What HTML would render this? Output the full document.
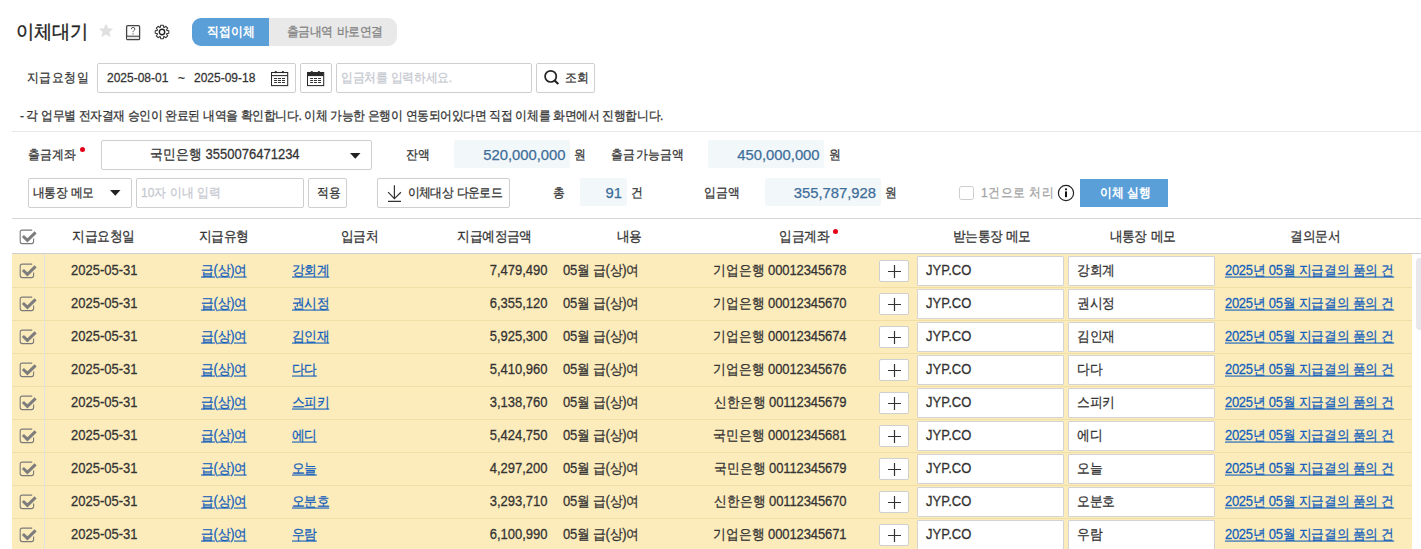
<!DOCTYPE html><html lang="ko"><head><meta charset="utf-8"><style>
*{box-sizing:border-box;margin:0;padding:0}
html,body{width:1421px;height:549px;overflow:hidden;background:#fff}
body{position:relative;font-family:"Liberation Sans",sans-serif;color:#333;font-size:13px;-webkit-text-stroke:0.25px currentColor}
.a{position:absolute}
.box{position:absolute;border:1px solid #cfcfcf;border-radius:2px;background:#fff}
.t{position:absolute;white-space:nowrap;line-height:20px;height:20px;transform:scaleY(1.1)}
.hl{position:absolute;left:12px;width:1409px;height:1px;background:#e8e8e8}
.amt{position:absolute;background:#f2f7f9;border-radius:2px}
.row{position:absolute;left:12px;width:1400px;height:33px;background:#fdecbb;border-bottom:1px solid #f0e0a8}
.lnk{color:#135fbc;text-decoration:underline}
.inp{position:absolute;top:1px;height:30px;background:#fff;border:1px solid #d3d3d3;border-radius:1px}
</style></head><body>
<div class="t" style="left:16px;top:21.8px;font-size:18px;color:#222;-webkit-text-stroke:0.35px #222;transform:scaleY(1.04)">이체대기</div>
<svg class="a" style="left:98px;top:23px" width="16" height="16" viewBox="0 0 16 16"><path d="M8 0.6L10.2 5.2L15.2 5.7L11.4 9.1L12.6 14.3L8 11.6L3.4 14.3L4.6 9.1L0.8 5.7L5.8 5.2Z" fill="#e0e0e0"/></svg>
<svg class="a" style="left:125px;top:24px" width="16" height="17" viewBox="0 0 16 17"><rect x="1.6" y="1.6" width="13" height="14" rx="1.2" fill="none" stroke="#444" stroke-width="1.3"/><rect x="2.2" y="12.4" width="11.8" height="2.6" fill="#e6e6e6"/><line x1="1.6" y1="12.2" x2="14.6" y2="12.2" stroke="#444" stroke-width="1.1"/><path d="M6.3 5.2Q6.4 3.4 8.1 3.4Q9.8 3.4 9.8 5Q9.8 6 8.8 6.6Q8 7.1 8 8.2" fill="none" stroke="#444" stroke-width="0.9"/><circle cx="8" cy="9.9" r="0.55" fill="#444"/></svg>
<svg class="a" style="left:154px;top:24px" width="16" height="16" viewBox="0 0 16 16"><path d="M6.37 3.27 L6.68 1.23 L9.32 1.23 L9.63 3.27 L10.19 3.51 L11.86 2.28 L13.72 4.14 L12.49 5.81 L12.73 6.37 L14.77 6.68 L14.77 9.32 L12.73 9.63 L12.49 10.19 L13.72 11.86 L11.86 13.72 L10.19 12.49 L9.63 12.73 L9.32 14.77 L6.68 14.77 L6.37 12.73 L5.81 12.49 L4.14 13.72 L2.28 11.86 L3.51 10.19 L3.27 9.63 L1.23 9.32 L1.23 6.68 L3.27 6.37 L3.51 5.81 L2.28 4.14 L4.14 2.28 L5.81 3.51Z" fill="none" stroke="#333" stroke-width="1.05" stroke-linejoin="round"/><circle cx="8" cy="8" r="2.7" fill="none" stroke="#222" stroke-width="1.4"/></svg>
<div class="a" style="left:192px;top:18px;width:205px;height:28px;border-radius:9px;background:#e9e9e9;overflow:hidden"><div class="a" style="left:0;top:0;width:77px;height:28px;background:#5b9fd9"></div></div>
<div class="t" style="left:207px;top:22px;font-size:12px;color:#fff;font-weight:bold;-webkit-text-stroke:0">직접이체</div>
<div class="t" style="left:287px;top:22px;font-size:12px;letter-spacing:-0.6px;color:#828282;word-spacing:1.5px">출금내역 바로연결</div>
<div class="t" style="left:27px;top:67.5px;font-size:12px;letter-spacing:0.45px">지급요청일</div>
<div class="box" style="left:97px;top:63px;width:199px;height:30px"></div>
<div class="t" style="left:107px;top:68px;font-size:12px">2025-08-01</div>
<div class="t" style="left:178px;top:68px;font-size:12px">~</div>
<div class="t" style="left:194px;top:68px;font-size:12px">2025-09-18</div>
<svg class="a" style="left:271px;top:70px" width="18" height="17" viewBox="0 0 18 17"><rect x="0.5" y="2.5" width="16.2" height="13.1" fill="none" stroke="#2a2a2a" stroke-width="1.05"/><line x1="0.5" y1="5.6" x2="16.7" y2="5.6" stroke="#2a2a2a" stroke-width="1.05"/><circle cx="4.8" cy="2.2" r="1.15" fill="#2a2a2a"/><circle cx="11.9" cy="2.2" r="1.15" fill="#2a2a2a"/><g stroke="#2a2a2a" stroke-width="0.95"><path d="M3.1 8.5h3M7 8.5h3M11 8.5h3M3.1 10.5h3M7 10.5h3M11 10.5h3M3.1 12.5h3M7 12.5h3M11 12.5h3"/></g></svg>
<div class="box" style="left:300px;top:63px;width:32px;height:30px"></div>
<svg class="a" style="left:307px;top:70px" width="18" height="17" viewBox="0 0 18 17"><rect x="0.5" y="2.5" width="16.2" height="13.1" fill="none" stroke="#2a2a2a" stroke-width="1.05"/><rect x="0.5" y="2.5" width="16.2" height="3.6" fill="#2a2a2a"/><circle cx="4.8" cy="2.2" r="1.15" fill="#2a2a2a"/><circle cx="11.9" cy="2.2" r="1.15" fill="#2a2a2a"/><g stroke="#2a2a2a" stroke-width="0.95"><path d="M3.1 8.5h3M7 8.5h3M11 8.5h3M3.1 10.5h3M7 10.5h3M11 10.5h3M3.1 12.5h3M7 12.5h3M11 12.5h3"/></g></svg>
<div class="box" style="left:336px;top:63px;width:196px;height:30px"></div>
<div class="t" style="left:341px;top:68.3px;font-size:12px;letter-spacing:-0.35px;color:#c6c9d0">입금처를 입력하세요.</div>
<div class="box" style="left:536px;top:63px;width:59px;height:30px"></div>
<svg class="a" style="left:543px;top:69px" width="18" height="18" viewBox="0 0 18 18"><circle cx="7.7" cy="7.4" r="5.6" fill="none" stroke="#222" stroke-width="1.7"/><line x1="11.6" y1="11.4" x2="15.3" y2="15.1" stroke="#222" stroke-width="2.1"/></svg>
<div class="t" style="left:565px;top:68px;font-size:12px">조회</div>
<div class="t" style="left:20px;top:106px;font-size:12px;letter-spacing:-0.43px">- 각 업무별 전자결재 승인이 완료된 내역을 확인합니다. 이체 가능한 은행이 연동되어있다면 직접 이체를 화면에서 진행합니다.</div>
<div class="hl" style="top:131px"></div>
<div class="t" style="left:28px;top:144.5px;font-size:12px">출금계좌</div>
<div class="a" style="left:80px;top:147px;width:5px;height:5px;border-radius:50%;background:#e5001a"></div>
<div class="box" style="left:101px;top:140px;width:271px;height:30px"></div>
<div class="t" style="left:150px;top:144.5px;font-size:13px">국민은행 3550076471234</div>
<svg class="a" style="left:350px;top:153px" width="11" height="6" viewBox="0 0 11 6"><path d="M0 0H10.5L5.25 5.8Z" fill="#222"/></svg>
<div class="t" style="left:405.5px;top:144.5px;font-size:12px;letter-spacing:0.8px">잔액</div>
<div class="amt" style="left:454px;top:140px;width:116px;height:28px"></div>
<div class="t" style="left:265.5px;top:144.5px;font-size:14.8px;color:#3d6d99;width:300px;text-align:right;transform:none">520,000,000</div>
<div class="t" style="left:574px;top:144.5px;font-size:12px">원</div>
<div class="t" style="left:611px;top:144.5px;font-size:12px;letter-spacing:0.3px">출금가능금액</div>
<div class="amt" style="left:708px;top:140px;width:116px;height:28px"></div>
<div class="t" style="left:519.6px;top:144.5px;font-size:14.8px;color:#3d6d99;width:300px;text-align:right;transform:none">450,000,000</div>
<div class="t" style="left:829px;top:144.5px;font-size:12px">원</div>
<div class="box" style="left:28px;top:178px;width:104px;height:30px"></div>
<div class="t" style="left:33px;top:183px;font-size:12px;letter-spacing:-0.75px;word-spacing:1.5px">내통장 메모</div>
<svg class="a" style="left:110px;top:190px" width="11" height="6" viewBox="0 0 11 6"><path d="M0 0H10.5L5.25 5.8Z" fill="#222"/></svg>
<div class="box" style="left:136px;top:178px;width:168px;height:30px"></div>
<div class="t" style="left:141px;top:183px;font-size:12px;color:#c6c9d0">10자 이내 입력</div>
<div class="box" style="left:308px;top:178px;width:39px;height:30px"></div>
<div class="t" style="left:317px;top:183px;font-size:12px">적용</div>
<div class="box" style="left:377px;top:178px;width:133px;height:30px"></div>
<svg class="a" style="left:386px;top:184px" width="17" height="19" viewBox="0 0 17 19"><path d="M8.4 1.2V14.6M2.1 8.2L8.4 14.6L14.9 8.2M2 17.4H15" fill="none" stroke="#333" stroke-width="1.2"/></svg>
<div class="t" style="left:408px;top:183px;font-size:12px;letter-spacing:-0.77px;word-spacing:1.5px">이체대상 다운로드</div>
<div class="t" style="left:553px;top:183px;font-size:12px">총</div>
<div class="amt" style="left:580px;top:178px;width:47px;height:28px"></div>
<div class="t" style="left:322px;top:183px;font-size:14.8px;color:#3d6d99;width:300px;text-align:right;transform:none">91</div>
<div class="t" style="left:631px;top:183px;font-size:12px">건</div>
<div class="t" style="left:704px;top:183px;font-size:12px">입금액</div>
<div class="amt" style="left:765px;top:178px;width:116px;height:28px"></div>
<div class="t" style="left:576px;top:183px;font-size:14.8px;color:#3d6d99;width:300px;text-align:right;transform:none">355,787,928</div>
<div class="t" style="left:885px;top:183px;font-size:12px">원</div>
<div class="a" style="left:959px;top:186px;width:15px;height:14px;border:1.5px solid #cdcdcd;border-radius:2.5px"></div>
<div class="t" style="left:981px;top:183px;font-size:12px;letter-spacing:0.45px;color:#a4a4a4">1건으로 처리</div>
<svg class="a" style="left:1057px;top:184px" width="18" height="18" viewBox="0 0 18 18"><circle cx="9" cy="9" r="7.6" fill="none" stroke="#222" stroke-width="1.2"/><circle cx="9" cy="5.3" r="1.1" fill="#111"/><rect x="8" y="7.4" width="2" height="5.8" fill="#111"/></svg>
<div class="a" style="left:1080px;top:179px;width:88px;height:28px;background:#5b9fd9"></div>
<div class="t" style="left:1100px;top:183px;font-size:12px;color:#fff;font-weight:bold;-webkit-text-stroke:0">이체 실행</div>
<div class="hl" style="top:218px;background:#d6d6d6"></div>
<div class="a" style="left:12px;top:253px;width:1409px;height:1px;background:#cfcfcf"></div>
<svg class="a" style="left:19px;top:229px" width="18" height="16" viewBox="0 0 18 16"><path d="M13.2 1.1H3.2Q1.2 1.1 1.2 3.1V12.6Q1.2 14.6 3.2 14.6H12.6Q14.6 14.6 14.6 12.6V9.5" fill="none" stroke="#7a7a7a" stroke-width="1.1"/><path d="M3.9 7.0L8.4 11.3L16.6 3.4" fill="none" stroke="#7d7d7d" stroke-width="3"/></svg>
<div class="t" style="left:-46.5px;top:226.8px;font-size:13px;letter-spacing:-0.55px;width:300px;text-align:center">지급요청일</div>
<div class="t" style="left:73.6px;top:226.8px;font-size:13px;letter-spacing:-0.55px;width:300px;text-align:center">지급유형</div>
<div class="t" style="left:209.39999999999998px;top:226.8px;font-size:13px;letter-spacing:-0.55px;width:300px;text-align:center">입금처</div>
<div class="t" style="left:344.6px;top:226.8px;font-size:13px;letter-spacing:-0.55px;width:300px;text-align:center">지급예정금액</div>
<div class="t" style="left:479.4px;top:226.8px;font-size:13px;letter-spacing:-0.55px;width:300px;text-align:center">내용</div>
<div class="t" style="left:654.1px;top:226.8px;font-size:13px;letter-spacing:-0.55px;width:300px;text-align:center">입금계좌</div>
<div class="t" style="left:841.9px;top:226.8px;font-size:13px;letter-spacing:-0.8px;width:300px;text-align:center;word-spacing:1.5px">받는통장 메모</div>
<div class="t" style="left:992.4000000000001px;top:226.8px;font-size:13px;letter-spacing:-0.8px;width:300px;text-align:center;word-spacing:1.5px">내통장 메모</div>
<div class="t" style="left:1165.25px;top:226.8px;font-size:13px;letter-spacing:-0.55px;width:300px;text-align:center">결의문서</div>
<div class="a" style="left:833px;top:229px;width:5px;height:5px;border-radius:50%;background:#e5001a"></div>
<div class="a" style="left:12px;top:254px;width:1400px;height:1px;background:#fdecbb"></div><div class="a" style="left:44px;top:254px;width:1px;height:1px;background:#e2e2e2"></div>
<div class="row" style="top:255px"><div class="a" style="left:32px;top:0;width:1px;height:33px;background:#e2e2e2"></div><svg class="a" style="left:7px;top:8px" width="18" height="16" viewBox="0 0 18 16"><path d="M13.2 1.1H3.2Q1.2 1.1 1.2 3.1V12.6Q1.2 14.6 3.2 14.6H12.6Q14.6 14.6 14.6 12.6V9.5" fill="none" stroke="#7a7a7a" stroke-width="1.1"/><path d="M3.9 7.0L8.4 11.3L16.6 3.4" fill="none" stroke="#7d7d7d" stroke-width="3"/></svg><div class="t" style="left:59px;top:5.5px;font-size:13px">2025-05-31</div><div class="t lnk" style="left:189px;top:5.5px;font-size:13px;letter-spacing:-0.4px">급(상)여</div><div class="t lnk" style="left:280px;top:5.5px;font-size:13px;letter-spacing:-0.6px">강회계</div><div class="t" style="left:235.5px;top:5.5px;font-size:13px;width:300px;text-align:right">7,479,490</div><div class="t" style="left:551px;top:5.5px;font-size:13px;letter-spacing:-0.3px">05월 급(상)여</div><div class="t" style="left:534.5px;top:5.5px;font-size:13px;letter-spacing:-0.1px;width:300px;text-align:right">기업은행 00012345678</div><div class="a" style="left:867px;top:5px;width:30px;height:22px;background:#fff;border:1px solid #cfcfcf;border-radius:2px"></div><svg class="a" style="left:875px;top:9px" width="15" height="15" viewBox="0 0 15 15"><path d="M1 7.5H14M7.5 1V14" stroke="#333" stroke-width="1.2"/></svg><div class="inp" style="left:905px;width:147px"></div><div class="t" style="left:914px;top:5.5px;font-size:13px">JYP.CO</div><div class="inp" style="left:1056px;width:147px"></div><div class="t" style="left:1065px;top:5.5px;font-size:13px;letter-spacing:-0.3px">강회계</div><div class="t lnk" style="left:1213px;top:5.5px;font-size:13px;letter-spacing:-0.3px">2025년 05월 지급결의 품의 건</div></div>
<div class="row" style="top:288px"><div class="a" style="left:32px;top:0;width:1px;height:33px;background:#e2e2e2"></div><svg class="a" style="left:7px;top:8px" width="18" height="16" viewBox="0 0 18 16"><path d="M13.2 1.1H3.2Q1.2 1.1 1.2 3.1V12.6Q1.2 14.6 3.2 14.6H12.6Q14.6 14.6 14.6 12.6V9.5" fill="none" stroke="#7a7a7a" stroke-width="1.1"/><path d="M3.9 7.0L8.4 11.3L16.6 3.4" fill="none" stroke="#7d7d7d" stroke-width="3"/></svg><div class="t" style="left:59px;top:5.5px;font-size:13px">2025-05-31</div><div class="t lnk" style="left:189px;top:5.5px;font-size:13px;letter-spacing:-0.4px">급(상)여</div><div class="t lnk" style="left:280px;top:5.5px;font-size:13px;letter-spacing:-0.6px">권시정</div><div class="t" style="left:235.5px;top:5.5px;font-size:13px;width:300px;text-align:right">6,355,120</div><div class="t" style="left:551px;top:5.5px;font-size:13px;letter-spacing:-0.3px">05월 급(상)여</div><div class="t" style="left:534.5px;top:5.5px;font-size:13px;letter-spacing:-0.1px;width:300px;text-align:right">기업은행 00012345670</div><div class="a" style="left:867px;top:5px;width:30px;height:22px;background:#fff;border:1px solid #cfcfcf;border-radius:2px"></div><svg class="a" style="left:875px;top:9px" width="15" height="15" viewBox="0 0 15 15"><path d="M1 7.5H14M7.5 1V14" stroke="#333" stroke-width="1.2"/></svg><div class="inp" style="left:905px;width:147px"></div><div class="t" style="left:914px;top:5.5px;font-size:13px">JYP.CO</div><div class="inp" style="left:1056px;width:147px"></div><div class="t" style="left:1065px;top:5.5px;font-size:13px;letter-spacing:-0.3px">권시정</div><div class="t lnk" style="left:1213px;top:5.5px;font-size:13px;letter-spacing:-0.3px">2025년 05월 지급결의 품의 건</div></div>
<div class="row" style="top:321px"><div class="a" style="left:32px;top:0;width:1px;height:33px;background:#e2e2e2"></div><svg class="a" style="left:7px;top:8px" width="18" height="16" viewBox="0 0 18 16"><path d="M13.2 1.1H3.2Q1.2 1.1 1.2 3.1V12.6Q1.2 14.6 3.2 14.6H12.6Q14.6 14.6 14.6 12.6V9.5" fill="none" stroke="#7a7a7a" stroke-width="1.1"/><path d="M3.9 7.0L8.4 11.3L16.6 3.4" fill="none" stroke="#7d7d7d" stroke-width="3"/></svg><div class="t" style="left:59px;top:5.5px;font-size:13px">2025-05-31</div><div class="t lnk" style="left:189px;top:5.5px;font-size:13px;letter-spacing:-0.4px">급(상)여</div><div class="t lnk" style="left:280px;top:5.5px;font-size:13px;letter-spacing:-0.6px">김인재</div><div class="t" style="left:235.5px;top:5.5px;font-size:13px;width:300px;text-align:right">5,925,300</div><div class="t" style="left:551px;top:5.5px;font-size:13px;letter-spacing:-0.3px">05월 급(상)여</div><div class="t" style="left:534.5px;top:5.5px;font-size:13px;letter-spacing:-0.1px;width:300px;text-align:right">기업은행 00012345674</div><div class="a" style="left:867px;top:5px;width:30px;height:22px;background:#fff;border:1px solid #cfcfcf;border-radius:2px"></div><svg class="a" style="left:875px;top:9px" width="15" height="15" viewBox="0 0 15 15"><path d="M1 7.5H14M7.5 1V14" stroke="#333" stroke-width="1.2"/></svg><div class="inp" style="left:905px;width:147px"></div><div class="t" style="left:914px;top:5.5px;font-size:13px">JYP.CO</div><div class="inp" style="left:1056px;width:147px"></div><div class="t" style="left:1065px;top:5.5px;font-size:13px;letter-spacing:-0.3px">김인재</div><div class="t lnk" style="left:1213px;top:5.5px;font-size:13px;letter-spacing:-0.3px">2025년 05월 지급결의 품의 건</div></div>
<div class="row" style="top:354px"><div class="a" style="left:32px;top:0;width:1px;height:33px;background:#e2e2e2"></div><svg class="a" style="left:7px;top:8px" width="18" height="16" viewBox="0 0 18 16"><path d="M13.2 1.1H3.2Q1.2 1.1 1.2 3.1V12.6Q1.2 14.6 3.2 14.6H12.6Q14.6 14.6 14.6 12.6V9.5" fill="none" stroke="#7a7a7a" stroke-width="1.1"/><path d="M3.9 7.0L8.4 11.3L16.6 3.4" fill="none" stroke="#7d7d7d" stroke-width="3"/></svg><div class="t" style="left:59px;top:5.5px;font-size:13px">2025-05-31</div><div class="t lnk" style="left:189px;top:5.5px;font-size:13px;letter-spacing:-0.4px">급(상)여</div><div class="t lnk" style="left:280px;top:5.5px;font-size:13px;letter-spacing:-0.6px">다다</div><div class="t" style="left:235.5px;top:5.5px;font-size:13px;width:300px;text-align:right">5,410,960</div><div class="t" style="left:551px;top:5.5px;font-size:13px;letter-spacing:-0.3px">05월 급(상)여</div><div class="t" style="left:534.5px;top:5.5px;font-size:13px;letter-spacing:-0.1px;width:300px;text-align:right">기업은행 00012345676</div><div class="a" style="left:867px;top:5px;width:30px;height:22px;background:#fff;border:1px solid #cfcfcf;border-radius:2px"></div><svg class="a" style="left:875px;top:9px" width="15" height="15" viewBox="0 0 15 15"><path d="M1 7.5H14M7.5 1V14" stroke="#333" stroke-width="1.2"/></svg><div class="inp" style="left:905px;width:147px"></div><div class="t" style="left:914px;top:5.5px;font-size:13px">JYP.CO</div><div class="inp" style="left:1056px;width:147px"></div><div class="t" style="left:1065px;top:5.5px;font-size:13px;letter-spacing:-0.3px">다다</div><div class="t lnk" style="left:1213px;top:5.5px;font-size:13px;letter-spacing:-0.3px">2025년 05월 지급결의 품의 건</div></div>
<div class="row" style="top:387px"><div class="a" style="left:32px;top:0;width:1px;height:33px;background:#e2e2e2"></div><svg class="a" style="left:7px;top:8px" width="18" height="16" viewBox="0 0 18 16"><path d="M13.2 1.1H3.2Q1.2 1.1 1.2 3.1V12.6Q1.2 14.6 3.2 14.6H12.6Q14.6 14.6 14.6 12.6V9.5" fill="none" stroke="#7a7a7a" stroke-width="1.1"/><path d="M3.9 7.0L8.4 11.3L16.6 3.4" fill="none" stroke="#7d7d7d" stroke-width="3"/></svg><div class="t" style="left:59px;top:5.5px;font-size:13px">2025-05-31</div><div class="t lnk" style="left:189px;top:5.5px;font-size:13px;letter-spacing:-0.4px">급(상)여</div><div class="t lnk" style="left:280px;top:5.5px;font-size:13px;letter-spacing:-0.6px">스피키</div><div class="t" style="left:235.5px;top:5.5px;font-size:13px;width:300px;text-align:right">3,138,760</div><div class="t" style="left:551px;top:5.5px;font-size:13px;letter-spacing:-0.3px">05월 급(상)여</div><div class="t" style="left:534.5px;top:5.5px;font-size:13px;letter-spacing:-0.1px;width:300px;text-align:right">신한은행 00112345679</div><div class="a" style="left:867px;top:5px;width:30px;height:22px;background:#fff;border:1px solid #cfcfcf;border-radius:2px"></div><svg class="a" style="left:875px;top:9px" width="15" height="15" viewBox="0 0 15 15"><path d="M1 7.5H14M7.5 1V14" stroke="#333" stroke-width="1.2"/></svg><div class="inp" style="left:905px;width:147px"></div><div class="t" style="left:914px;top:5.5px;font-size:13px">JYP.CO</div><div class="inp" style="left:1056px;width:147px"></div><div class="t" style="left:1065px;top:5.5px;font-size:13px;letter-spacing:-0.3px">스피키</div><div class="t lnk" style="left:1213px;top:5.5px;font-size:13px;letter-spacing:-0.3px">2025년 05월 지급결의 품의 건</div></div>
<div class="row" style="top:420px"><div class="a" style="left:32px;top:0;width:1px;height:33px;background:#e2e2e2"></div><svg class="a" style="left:7px;top:8px" width="18" height="16" viewBox="0 0 18 16"><path d="M13.2 1.1H3.2Q1.2 1.1 1.2 3.1V12.6Q1.2 14.6 3.2 14.6H12.6Q14.6 14.6 14.6 12.6V9.5" fill="none" stroke="#7a7a7a" stroke-width="1.1"/><path d="M3.9 7.0L8.4 11.3L16.6 3.4" fill="none" stroke="#7d7d7d" stroke-width="3"/></svg><div class="t" style="left:59px;top:5.5px;font-size:13px">2025-05-31</div><div class="t lnk" style="left:189px;top:5.5px;font-size:13px;letter-spacing:-0.4px">급(상)여</div><div class="t lnk" style="left:280px;top:5.5px;font-size:13px;letter-spacing:-0.6px">에디</div><div class="t" style="left:235.5px;top:5.5px;font-size:13px;width:300px;text-align:right">5,424,750</div><div class="t" style="left:551px;top:5.5px;font-size:13px;letter-spacing:-0.3px">05월 급(상)여</div><div class="t" style="left:534.5px;top:5.5px;font-size:13px;letter-spacing:-0.1px;width:300px;text-align:right">국민은행 00012345681</div><div class="a" style="left:867px;top:5px;width:30px;height:22px;background:#fff;border:1px solid #cfcfcf;border-radius:2px"></div><svg class="a" style="left:875px;top:9px" width="15" height="15" viewBox="0 0 15 15"><path d="M1 7.5H14M7.5 1V14" stroke="#333" stroke-width="1.2"/></svg><div class="inp" style="left:905px;width:147px"></div><div class="t" style="left:914px;top:5.5px;font-size:13px">JYP.CO</div><div class="inp" style="left:1056px;width:147px"></div><div class="t" style="left:1065px;top:5.5px;font-size:13px;letter-spacing:-0.3px">에디</div><div class="t lnk" style="left:1213px;top:5.5px;font-size:13px;letter-spacing:-0.3px">2025년 05월 지급결의 품의 건</div></div>
<div class="row" style="top:453px"><div class="a" style="left:32px;top:0;width:1px;height:33px;background:#e2e2e2"></div><svg class="a" style="left:7px;top:8px" width="18" height="16" viewBox="0 0 18 16"><path d="M13.2 1.1H3.2Q1.2 1.1 1.2 3.1V12.6Q1.2 14.6 3.2 14.6H12.6Q14.6 14.6 14.6 12.6V9.5" fill="none" stroke="#7a7a7a" stroke-width="1.1"/><path d="M3.9 7.0L8.4 11.3L16.6 3.4" fill="none" stroke="#7d7d7d" stroke-width="3"/></svg><div class="t" style="left:59px;top:5.5px;font-size:13px">2025-05-31</div><div class="t lnk" style="left:189px;top:5.5px;font-size:13px;letter-spacing:-0.4px">급(상)여</div><div class="t lnk" style="left:280px;top:5.5px;font-size:13px;letter-spacing:-0.6px">오늘</div><div class="t" style="left:235.5px;top:5.5px;font-size:13px;width:300px;text-align:right">4,297,200</div><div class="t" style="left:551px;top:5.5px;font-size:13px;letter-spacing:-0.3px">05월 급(상)여</div><div class="t" style="left:534.5px;top:5.5px;font-size:13px;letter-spacing:-0.1px;width:300px;text-align:right">국민은행 00112345679</div><div class="a" style="left:867px;top:5px;width:30px;height:22px;background:#fff;border:1px solid #cfcfcf;border-radius:2px"></div><svg class="a" style="left:875px;top:9px" width="15" height="15" viewBox="0 0 15 15"><path d="M1 7.5H14M7.5 1V14" stroke="#333" stroke-width="1.2"/></svg><div class="inp" style="left:905px;width:147px"></div><div class="t" style="left:914px;top:5.5px;font-size:13px">JYP.CO</div><div class="inp" style="left:1056px;width:147px"></div><div class="t" style="left:1065px;top:5.5px;font-size:13px;letter-spacing:-0.3px">오늘</div><div class="t lnk" style="left:1213px;top:5.5px;font-size:13px;letter-spacing:-0.3px">2025년 05월 지급결의 품의 건</div></div>
<div class="row" style="top:486px"><div class="a" style="left:32px;top:0;width:1px;height:33px;background:#e2e2e2"></div><svg class="a" style="left:7px;top:8px" width="18" height="16" viewBox="0 0 18 16"><path d="M13.2 1.1H3.2Q1.2 1.1 1.2 3.1V12.6Q1.2 14.6 3.2 14.6H12.6Q14.6 14.6 14.6 12.6V9.5" fill="none" stroke="#7a7a7a" stroke-width="1.1"/><path d="M3.9 7.0L8.4 11.3L16.6 3.4" fill="none" stroke="#7d7d7d" stroke-width="3"/></svg><div class="t" style="left:59px;top:5.5px;font-size:13px">2025-05-31</div><div class="t lnk" style="left:189px;top:5.5px;font-size:13px;letter-spacing:-0.4px">급(상)여</div><div class="t lnk" style="left:280px;top:5.5px;font-size:13px;letter-spacing:-0.6px">오분호</div><div class="t" style="left:235.5px;top:5.5px;font-size:13px;width:300px;text-align:right">3,293,710</div><div class="t" style="left:551px;top:5.5px;font-size:13px;letter-spacing:-0.3px">05월 급(상)여</div><div class="t" style="left:534.5px;top:5.5px;font-size:13px;letter-spacing:-0.1px;width:300px;text-align:right">신한은행 00112345670</div><div class="a" style="left:867px;top:5px;width:30px;height:22px;background:#fff;border:1px solid #cfcfcf;border-radius:2px"></div><svg class="a" style="left:875px;top:9px" width="15" height="15" viewBox="0 0 15 15"><path d="M1 7.5H14M7.5 1V14" stroke="#333" stroke-width="1.2"/></svg><div class="inp" style="left:905px;width:147px"></div><div class="t" style="left:914px;top:5.5px;font-size:13px">JYP.CO</div><div class="inp" style="left:1056px;width:147px"></div><div class="t" style="left:1065px;top:5.5px;font-size:13px;letter-spacing:-0.3px">오분호</div><div class="t lnk" style="left:1213px;top:5.5px;font-size:13px;letter-spacing:-0.3px">2025년 05월 지급결의 품의 건</div></div>
<div class="row" style="top:519px"><div class="a" style="left:32px;top:0;width:1px;height:33px;background:#e2e2e2"></div><svg class="a" style="left:7px;top:8px" width="18" height="16" viewBox="0 0 18 16"><path d="M13.2 1.1H3.2Q1.2 1.1 1.2 3.1V12.6Q1.2 14.6 3.2 14.6H12.6Q14.6 14.6 14.6 12.6V9.5" fill="none" stroke="#7a7a7a" stroke-width="1.1"/><path d="M3.9 7.0L8.4 11.3L16.6 3.4" fill="none" stroke="#7d7d7d" stroke-width="3"/></svg><div class="t" style="left:59px;top:5.5px;font-size:13px">2025-05-31</div><div class="t lnk" style="left:189px;top:5.5px;font-size:13px;letter-spacing:-0.4px">급(상)여</div><div class="t lnk" style="left:280px;top:5.5px;font-size:13px;letter-spacing:-0.6px">우람</div><div class="t" style="left:235.5px;top:5.5px;font-size:13px;width:300px;text-align:right">6,100,990</div><div class="t" style="left:551px;top:5.5px;font-size:13px;letter-spacing:-0.3px">05월 급(상)여</div><div class="t" style="left:534.5px;top:5.5px;font-size:13px;letter-spacing:-0.1px;width:300px;text-align:right">기업은행 00012345671</div><div class="a" style="left:867px;top:5px;width:30px;height:22px;background:#fff;border:1px solid #cfcfcf;border-radius:2px"></div><svg class="a" style="left:875px;top:9px" width="15" height="15" viewBox="0 0 15 15"><path d="M1 7.5H14M7.5 1V14" stroke="#333" stroke-width="1.2"/></svg><div class="inp" style="left:905px;width:147px"></div><div class="t" style="left:914px;top:5.5px;font-size:13px">JYP.CO</div><div class="inp" style="left:1056px;width:147px"></div><div class="t" style="left:1065px;top:5.5px;font-size:13px;letter-spacing:-0.3px">우람</div><div class="t lnk" style="left:1213px;top:5.5px;font-size:13px;letter-spacing:-0.3px">2025년 05월 지급결의 품의 건</div></div>
<div class="a" style="left:1416px;top:258px;width:8px;height:72px;border-radius:4px;background:#e8e8ec"></div>
</body></html>
